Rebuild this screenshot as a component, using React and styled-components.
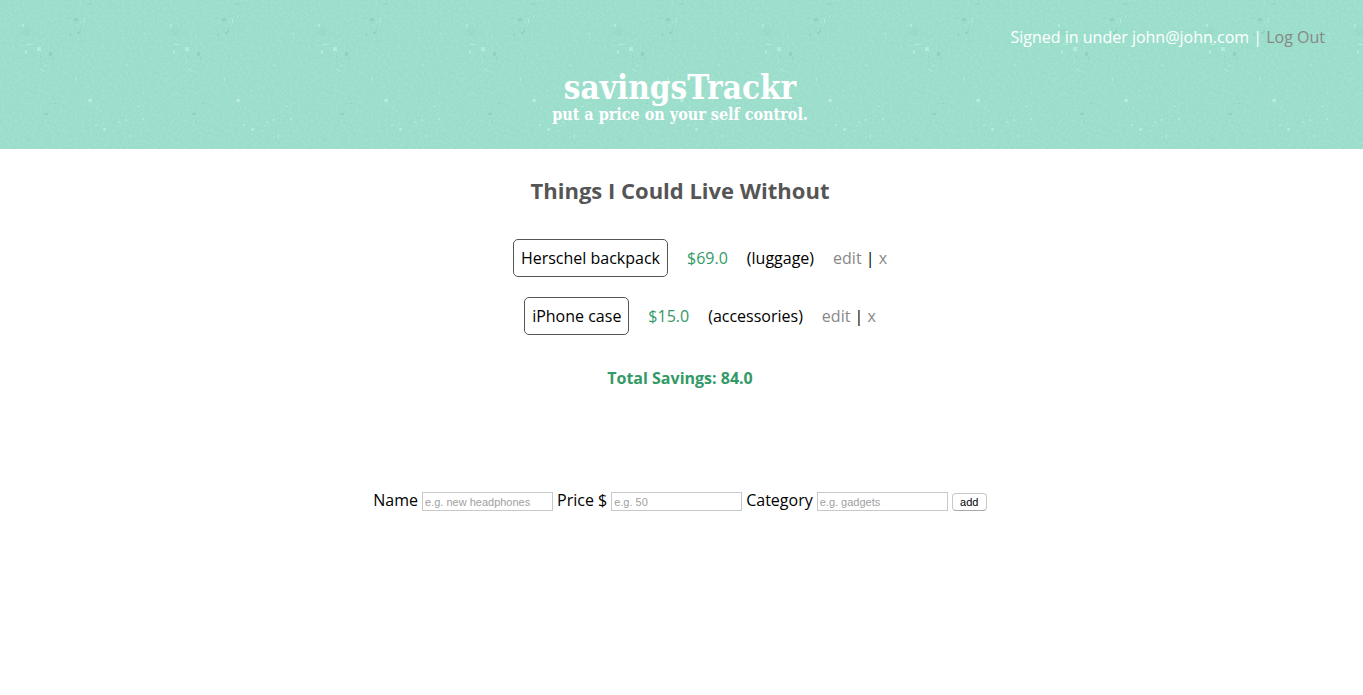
import React from "react";
import styled, { createGlobalStyle } from "styled-components";

const GlobalStyle = createGlobalStyle`
  body {
    margin: 0;
    background: #fff;
    color: #000;
    font-family: "Open Sans", sans-serif;
    font-size: 16px;
    line-height: 22px;
  }
`;

const Header = styled.header`
  position: relative;
  overflow: hidden;
  padding: 26px 38px;
  background: #9bddcb;
  color: #fff;
`;

const Texture = styled.svg`
  position: absolute;
  inset: 0;
  width: 100%;
  height: 100%;
`;

const Account = styled.nav`
  position: relative;
  text-align: right;
`;

const Brand = styled.div`
  position: relative;
  padding: 22px 3px 0 0;
  text-align: center;
  font-family: "DejaVu Serif Condensed", "DejaVu Serif", serif;
  font-stretch: condensed;
  font-weight: bold;
`;

const Title = styled.h1`
  margin: 0;
  font-size: 33px;
  line-height: 36px;
`;

const Tagline = styled.p`
  margin: 0;
  font-size: 16px;
  line-height: 17px;
`;

const Link = styled.a`
  color: #888;
  text-decoration: none;
`;

const Main = styled.main`
  padding: 25px 3px 0 0;
  text-align: center;
`;

const Heading = styled.h2`
  margin: 0;
  color: #555;
  font-size: 22px;
  line-height: 32px;
`;

const List = styled.ul`
  display: flex;
  flex-direction: column;
  align-items: center;
  gap: 20px;
  margin: 33px 0 32px;
  padding: 0 0 0 40px;
  list-style: none;
`;

const Item = styled.li`
  display: flex;
  align-items: center;
  gap: 19px;
`;

const ItemName = styled.span`
  padding: 7px;
  border: 1px solid #555;
  border-radius: 5px;
`;

const Price = styled.span`
  color: #339966;
`;

const Total = styled.p`
  margin: 0;
  color: #339966;
  font-weight: bold;
`;

const Form = styled.form`
  display: flex;
  flex-wrap: wrap;
  justify-content: center;
  align-items: baseline;
  gap: 4px;
  margin-top: 100px;
`;

const Field = styled.label`
  display: flex;
  align-items: baseline;
  gap: 4px;
`;

const Input = styled.input`
  box-sizing: border-box;
  width: 131px;
  height: 19px;
  padding: 2px 2px 0;
  border: 1px solid #c8c8c8;
  background: #fff;
  font-family: "Liberation Sans", Arial, sans-serif;
  font-size: 11px;

  &::placeholder {
    color: #a0a0a0;
  }
`;

const AddButton = styled.button`
  box-sizing: border-box;
  width: 35px;
  height: 18px;
  padding: 0;
  border: 1px solid #c8c8c8;
  border-bottom-color: #aaa;
  border-radius: 4px;
  background: #fff;
  color: #000;
  font-family: "Liberation Sans", Arial, sans-serif;
  font-size: 11px;
  line-height: 16px;
`;

const lightSpecks = [
  [22, 24, 2, 3], [37, 47, 4, 4], [44, 39, 1, 1], [26, 44, 6, 1], [25, 50, 2, 4],
  [40, 69, 3, 1], [43, 71, 2, 1], [28, 92, 1, 2], [88, 99, 4, 3], [97, 106, 1, 3],
  [95, 124, 2, 2], [118, 121, 2, 2], [125, 119, 2, 2], [142, 118, 2, 2],
  [129, 135, 2, 2], [103, 128, 3, 3], [113, 131, 2, 1], [137, 106, 3, 1],
  [145, 33, 1, 3], [84, 19, 1, 4], [89, 15, 1, 2], [80, 22, 2, 1],
  [102, 91, 1, 1], [126, 64, 1, 2], [19, 78, 2, 1], [76, 78, 1, 3],
  [11, 144, 1, 1], [118, 1, 1, 1], [59, 19, 1, 1], [99, 26, 1, 1],
];

const darkSpecks = [
  [74, 18, 4, 3], [68, 17, 2, 1], [87, 4, 3, 1], [89, 3, 2, 1],
  [69, 34, 2, 2], [77, 32, 3, 2], [79, 30, 2, 2], [49, 52, 3, 4],
  [40, 56, 2, 1], [52, 57, 1, 3], [56, 65, 1, 1], [44, 113, 4, 2],
  [41, 124, 2, 1], [47, 122, 2, 1], [54, 103, 2, 1], [27, 138, 2, 1],
];

function Paper() {
  return (
    <Texture aria-hidden="true">
      <defs>
        <filter id="grain" x="0" y="0" width="100%" height="100%" colorInterpolationFilters="sRGB">
          <feTurbulence type="fractalNoise" baseFrequency="0.4" numOctaves="3" seed="4" />
          <feColorMatrix values="0 0 0 0 0.75  0 0 0 0 0.95  0 0 0 0 0.88  1.4 0 0 0 -0.58" />
        </filter>
        <pattern id="paper" width="148" height="160" patternUnits="userSpaceOnUse">
          <rect width="148" height="160" filter="url(#grain)" opacity="0.4" />
          <rect x="21" y="28" width="10" height="8" rx="3" fill="#8ccfbd" opacity="0.2" />
          <g fill="#bdf3e3" opacity="0.65">
            {lightSpecks.map(([x, y, w, h]) => (
              <rect key={`${x}-${y}`} x={x} y={y} width={w} height={h} rx="1" />
            ))}
          </g>
          <g fill="#7fc3b1" opacity="0.5">
            {darkSpecks.map(([x, y, w, h]) => (
              <rect key={`${x}-${y}`} x={x} y={y} width={w} height={h} rx="1" />
            ))}
          </g>
        </pattern>
      </defs>
      <rect width="100%" height="100%" fill="url(#paper)" />
    </Texture>
  );
}

const items = [
  { name: "Herschel backpack", price: "$69.0", category: "(luggage)" },
  { name: "iPhone case", price: "$15.0", category: "(accessories)" },
];

const fields = [
  { id: "name", label: "Name", hint: "e.g. new headphones" },
  { id: "price", label: "Price $", hint: "e.g. 50" },
  { id: "category", label: "Category", hint: "e.g. gadgets" },
];

export default function App() {
  return (
    <>
      <GlobalStyle />
      <Header>
        <Paper />
        <Account>
          Signed in under john@john.com | <Link href="#logout">Log Out</Link>
        </Account>
        <Brand>
          <Title>savingsTrackr</Title>
          <Tagline>put a price on your self control.</Tagline>
        </Brand>
      </Header>
      <Main>
        <Heading>Things I Could Live Without</Heading>
        <List>
          {items.map((item) => (
            <Item key={item.name}>
              <ItemName>{item.name}</ItemName>
              <Price>{item.price}</Price>
              <span>{item.category}</span>
              <span>
                <Link href="#edit">edit</Link> | <Link href="#delete">x</Link>
              </span>
            </Item>
          ))}
        </List>
        <Total>Total Savings: 84.0</Total>
        <Form onSubmit={(event) => event.preventDefault()}>
          {fields.map((field) => (
            <Field key={field.id} htmlFor={field.id}>
              {field.label}
              <Input id={field.id} type="text" placeholder={field.hint} />
            </Field>
          ))}
          <AddButton type="submit">add</AddButton>
        </Form>
      </Main>
    </>
  );
}
